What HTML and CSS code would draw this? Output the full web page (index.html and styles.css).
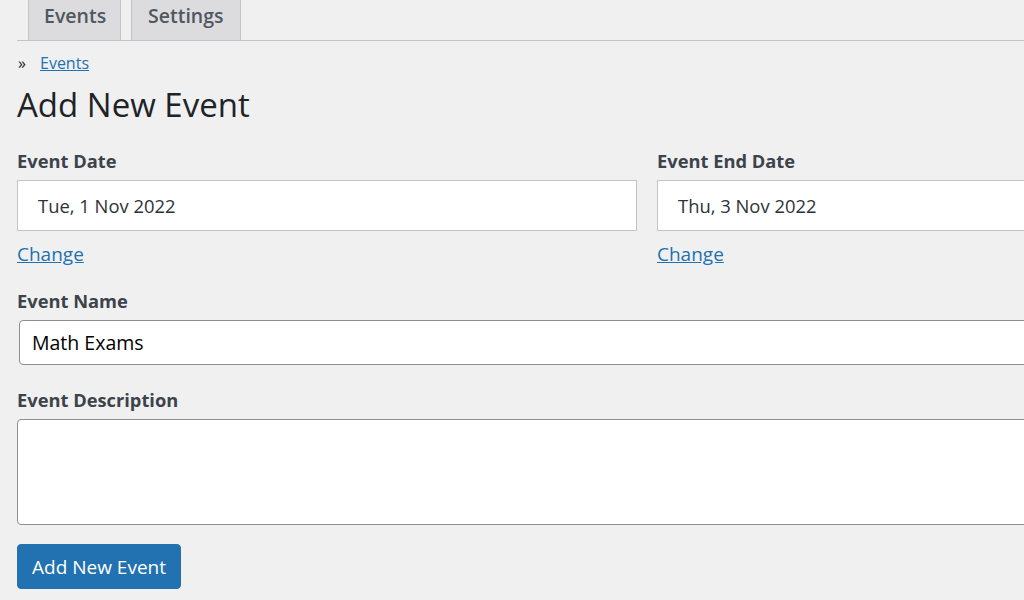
FILE: index.html
```html
<!DOCTYPE html>
<html>
<head>
<meta charset="utf-8">
<link rel="stylesheet" href="styles.css">
</head>
<body>
<div class="page">
  <nav class="tabs">
    <a class="tab">Events</a>
    <a class="tab">Settings</a>
  </nav>
  <div class="crumbs"><span class="raquo">»</span><a class="link" href="#">Events</a></div>
  <h1 class="title">Add New Event</h1>
  <div class="dates">
    <div class="col">
      <label class="label">Event Date</label>
      <div class="datebox">Tue, 1 Nov 2022</div>
      <a class="link change" href="#">Change</a>
    </div>
    <div class="col">
      <label class="label">Event End Date</label>
      <div class="datebox">Thu, 3 Nov 2022</div>
      <a class="link change" href="#">Change</a>
    </div>
  </div>
  <label class="label">Event Name</label>
  <div class="namebox">Math Exams</div>
  <label class="label desc">Event Description</label>
  <div class="textarea"></div>
  <button class="btn">Add New Event</button>
</div>
</body>
</html>
```
FILE: styles.css
```css
html, body {
  margin: 0;
  padding: 0;
  background: #f0f0f1;
  overflow: hidden;
  width: 1024px;
  height: 600px;
}
.page {
  font-family: "Open Sans", "Noto Sans", sans-serif;
  padding-left: 17px;
  width: 1400px;
  color: #3c434a;
}
.tabs {
  display: flex;
  height: 40px;
  border-bottom: 1px solid #c3c4c7;
  padding-left: 11px;
  gap: 10px;
}
.tab {
  box-sizing: border-box;
  height: 40px;
  background: #dcdcde;
  border: 1px solid #c3c4c7;
  border-top: none;
  border-bottom: none;
  color: #50575e;
  font-size: 19.5px;
  font-weight: 600;
  line-height: 32px;
  padding: 0 15px;
}
.tab:first-child { width: 93px; }
.tab:nth-child(2) { width: 110px; padding-left: 16px; }
.crumbs {
  margin-top: 10px;
  font-size: 16px;
  line-height: 24px;
  display: flex;
}
.raquo {
  width: 22px;
  padding-left: 1px;
  color: #1d2327;
}
.link {
  color: #2271b1;
  text-decoration: underline;
}
.title {
  margin: 8px 0 0 0;
  font-size: 33px;
  font-weight: 400;
  line-height: 44px;
  color: #1d2327;
}
.dates {
  display: flex;
  gap: 20px;
  margin-top: 22px;
}
.col {
  width: 620px;
  display: flex;
  flex-direction: column;
  align-items: flex-start;
}
.label {
  display: block;
  font-size: 18.3px;
  font-weight: 700;
  line-height: 24px;
  color: #3c434a;
}
.datebox {
  box-sizing: border-box;
  align-self: stretch;
  margin-top: 7px;
  height: 51px;
  background: #fff;
  border: 1px solid #c3c4c7;
  padding-left: 20px;
  font-size: 18.4px;
  line-height: 49px;
  color: #2c3338;
}
.change {
  margin-top: 10px;
  font-size: 19px;
  line-height: 26px;
}
.dates + .label {
  margin-top: 22px;
}
.namebox {
  box-sizing: border-box;
  margin-top: 7px;
  margin-left: 2px;
  height: 45px;
  background: #fff;
  border: 1px solid #8c8f94;
  border-radius: 4px;
  padding-left: 12px;
  font-size: 19.5px;
  line-height: 43px;
  color: #000;
}
.desc {
  margin-top: 23px;
}
.textarea {
  box-sizing: border-box;
  margin-top: 7px;
  height: 106px;
  background: #fff;
  border: 1px solid #8c8f94;
  border-radius: 4px;
}
.btn {
  display: block;
  margin-top: 19px;
  height: 45px;
  width: 164px;
  background: #2271b1;
  border: 1px solid #2271b1;
  border-radius: 4px;
  color: #fff;
  font-family: inherit;
  font-size: 19px;
  padding: 0;
}
```
